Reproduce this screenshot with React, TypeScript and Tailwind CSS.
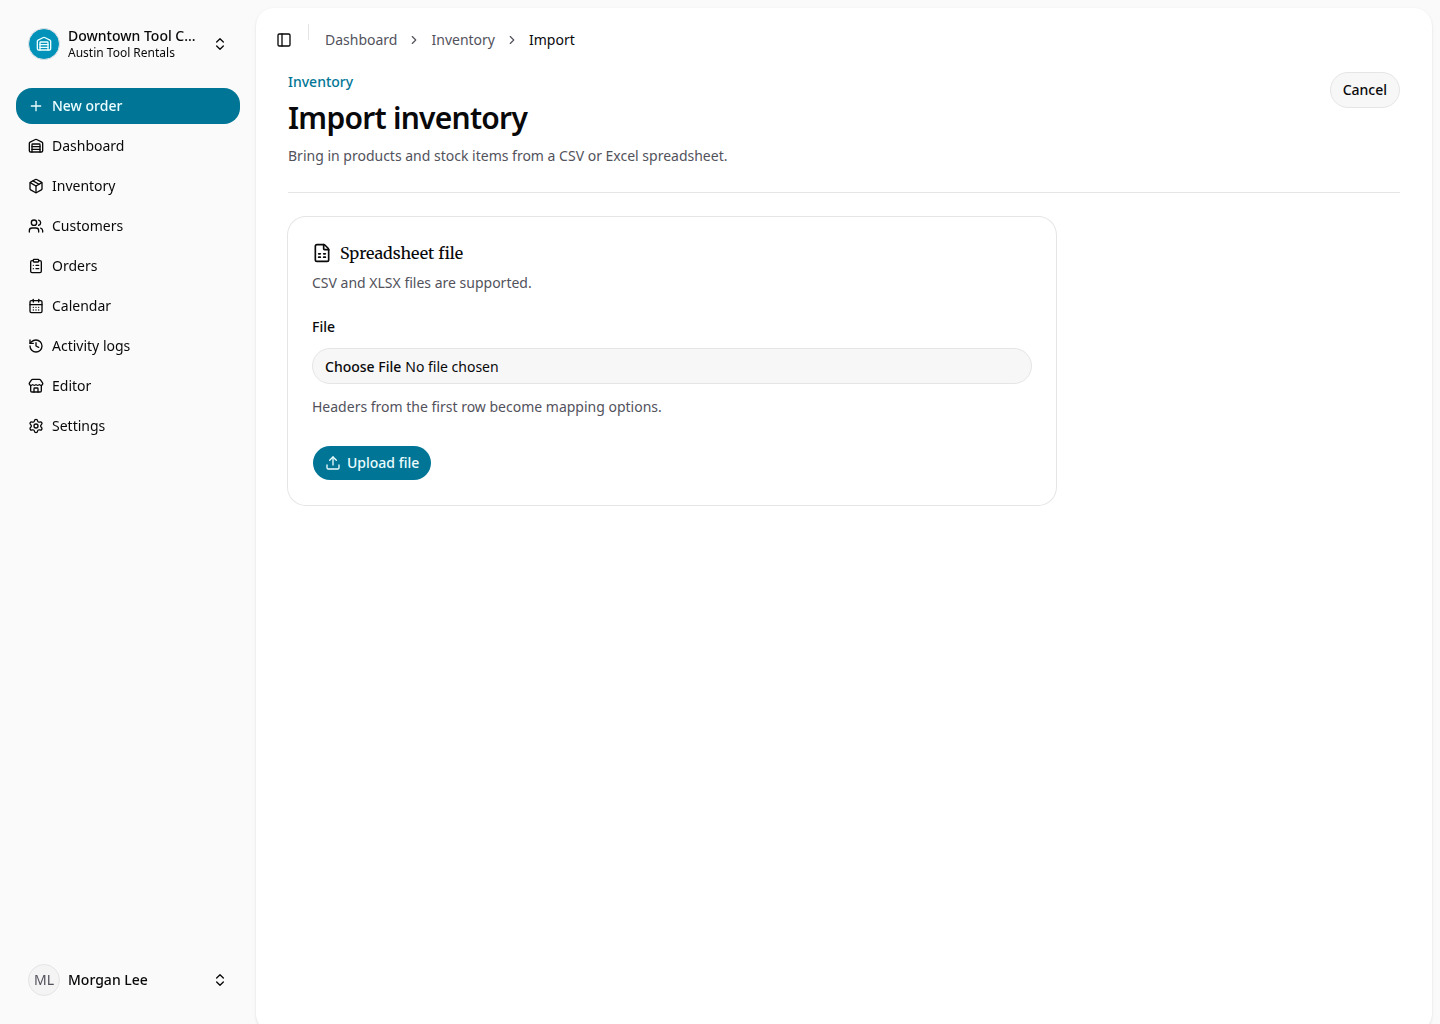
import React from 'react';
import {
  CalendarDays,
  ChevronRight,
  ChevronsUpDown,
  ClipboardList,
  FileSpreadsheet,
  History,
  Package,
  PanelLeft,
  Plus,
  Settings,
  Store,
  Upload,
  Users,
  Warehouse,
  type LucideIcon,
} from 'lucide-react';

interface NavItem {
  label: string;
  icon: LucideIcon;
}

const NAV_ITEMS: NavItem[] = [
  { label: 'Dashboard', icon: Warehouse },
  { label: 'Inventory', icon: Package },
  { label: 'Customers', icon: Users },
  { label: 'Orders', icon: ClipboardList },
  { label: 'Calendar', icon: CalendarDays },
  { label: 'Activity logs', icon: History },
  { label: 'Editor', icon: Store },
  { label: 'Settings', icon: Settings },
];

const Sidebar: React.FC = () => (
  <aside className="sticky top-0 flex h-screen w-64 shrink-0 flex-col p-4">
    {/* Workspace switcher */}
    <button type="button" className="flex h-14 items-center gap-2 rounded-2xl px-3 text-left">
      <span className="flex size-8 shrink-0 items-center justify-center rounded-full border border-zinc-200 bg-cyan-600 text-cyan-50">
        <Warehouse className="size-4" />
      </span>
      <span className="flex min-w-0 flex-1 flex-col">
        <span className="truncate text-sm leading-[18px] font-medium">Downtown Tool C...</span>
        <span className="truncate text-xs">Austin Tool Rentals</span>
      </span>
      <ChevronsUpDown className="size-4 shrink-0" />
    </button>

    <nav className="mt-4 flex flex-1 flex-col gap-1 text-sm">
      <a href="#new-order" className="flex h-9 items-center gap-2 rounded-2xl bg-cyan-700 px-3 font-medium text-cyan-50">
        <Plus className="size-4" />
        New order
      </a>
      {NAV_ITEMS.map(({ label, icon: Icon }) => (
        <a key={label} href="#" className="flex h-9 items-center gap-2 rounded-2xl px-3">
          <Icon className="size-4" />
          {label}
        </a>
      ))}
    </nav>

    {/* Account menu */}
    <button type="button" className="flex h-14 items-center gap-2 rounded-2xl px-3 text-left text-sm">
      <span className="flex size-8 shrink-0 items-center justify-center rounded-full border border-zinc-200 bg-zinc-100 text-zinc-600">
        ML
      </span>
      <span className="min-w-0 flex-1 truncate font-medium">Morgan Lee</span>
      <ChevronsUpDown className="size-4 shrink-0" />
    </button>
  </aside>
);

const TopBar: React.FC = () => (
  <header className="flex items-center gap-2 p-4">
    <button type="button" aria-label="Toggle sidebar" className="-ml-1 flex size-8 items-center justify-center rounded-full">
      <PanelLeft className="size-4" />
    </button>
    <div className="mr-2 h-4 w-px self-start bg-neutral-200" />
    <nav aria-label="Breadcrumb">
      <ol className="flex items-center gap-2.5 text-sm text-zinc-600">
        <li><a href="#dashboard">Dashboard</a></li>
        <li aria-hidden="true"><ChevronRight className="size-3.5" /></li>
        <li><a href="#inventory">Inventory</a></li>
        <li aria-hidden="true"><ChevronRight className="size-3.5" /></li>
        <li className="text-zinc-950" aria-current="page">Import</li>
      </ol>
    </nav>
  </header>
);

const UploadCard: React.FC = () => (
  <section className="mt-6 max-w-3xl rounded-[18px] bg-white p-6 ring-1 ring-neutral-200">
    <h2 className="flex items-center gap-2 font-[Merriweather,'Liberation_Serif',serif] text-base font-medium">
      <FileSpreadsheet className="size-5" />
      Spreadsheet file
    </h2>
    <p className="mt-2 text-sm text-zinc-600">CSV and XLSX files are supported.</p>

    <form className="mt-6 flex flex-col items-start gap-7">
      <div className="flex w-full flex-col gap-3 text-sm">
        <label htmlFor="file" className="leading-[19px] font-medium">File</label>
        <input
          id="file"
          type="file"
          className="h-9 w-full rounded-[18px] border border-neutral-200 bg-[#f7f7f7] px-3 py-1 file:mr-1 file:inline-flex file:h-7 file:border-0 file:bg-transparent file:text-sm file:font-medium"
        />
        <p className="leading-[21px] text-zinc-600">Headers from the first row become mapping options.</p>
      </div>
      <button
        type="button"
        className="flex h-9 items-center gap-1.5 rounded-full border border-transparent bg-cyan-700 bg-clip-padding px-3 text-sm font-medium text-cyan-50"
      >
        <Upload className="size-4" />
        Upload file
      </button>
    </form>
  </section>
);

const App: React.FC = () => {
  return (
    <div className="flex h-screen overflow-hidden bg-neutral-50 font-['Noto_Sans',sans-serif] text-zinc-950">
      <Sidebar />

      <main className="mt-2 mr-2 min-h-screen min-w-0 flex-1 rounded-[18px] bg-white shadow-sm">
        <TopBar />
        <div className="px-8">
          <div className="flex items-start justify-between border-b border-neutral-200 pb-6">
            <div>
              <p className="text-sm font-medium text-cyan-700">Inventory</p>
              <h1 className="mt-2 text-3xl font-semibold tracking-tight">Import inventory</h1>
              <p className="mt-2 text-sm leading-6 text-zinc-600">
                Bring in products and stock items from a CSV or Excel spreadsheet.
              </p>
            </div>
            <button type="button" className="h-9 rounded-full border border-neutral-200 bg-[#f7f7f7] px-3 text-sm font-medium">
              Cancel
            </button>
          </div>
          <UploadCard />
        </div>
      </main>
    </div>
  );
};

export default App;
